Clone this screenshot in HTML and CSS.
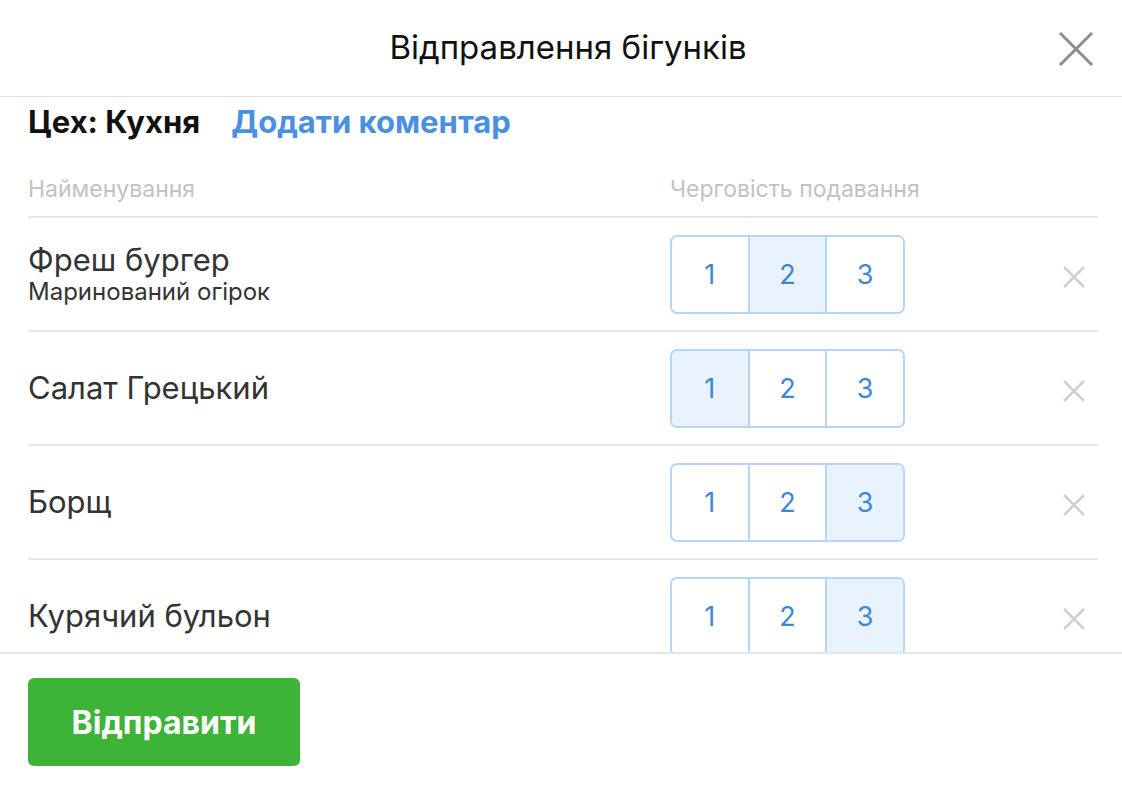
FILE: index.html
```html
<!DOCTYPE html>
<html lang="uk">
<head>
<meta charset="utf-8">
<title>Відправлення бігунків</title>
<link rel="stylesheet" href="styles.css">
</head>
<body>
<div class="modal">
  <header class="modal-header">
    <h1 class="modal-title">Відправлення бігунків</h1>
    <button class="close-btn" aria-label="Закрити">
      <svg width="36" height="36" viewBox="0 0 36 36"><path d="M2 2 L34 34 M34 2 L2 34" stroke="#8c8c8c" stroke-width="3" fill="none"/></svg>
    </button>
  </header>
  <main class="modal-body">
    <div class="shop-line">
      <span class="shop">Цех: Кухня</span>
      <a class="add-comment" href="#">Додати коментар</a>
    </div>
    <div class="table-head">
      <span>Найменування</span>
      <span>Черговість подавання</span>
      <span></span>
    </div>
    <div class="row">
      <div class="name"><div class="title">Фреш бургер</div><div class="sub">Маринований огірок</div></div>
      <div class="seg"><span>1</span><span class="on">2</span><span>3</span></div>
      <button class="remove" aria-label="Видалити"><svg width="24" height="24" viewBox="0 0 24 24"><path d="M2 2 L22 22 M22 2 L2 22" stroke="#cfcfcf" stroke-width="2.5" fill="none"/></svg></button>
    </div>
    <div class="row">
      <div class="name"><div class="title">Салат Грецький</div></div>
      <div class="seg"><span class="on">1</span><span>2</span><span>3</span></div>
      <button class="remove" aria-label="Видалити"><svg width="24" height="24" viewBox="0 0 24 24"><path d="M2 2 L22 22 M22 2 L2 22" stroke="#cfcfcf" stroke-width="2.5" fill="none"/></svg></button>
    </div>
    <div class="row">
      <div class="name"><div class="title">Борщ</div></div>
      <div class="seg"><span>1</span><span>2</span><span class="on">3</span></div>
      <button class="remove" aria-label="Видалити"><svg width="24" height="24" viewBox="0 0 24 24"><path d="M2 2 L22 22 M22 2 L2 22" stroke="#cfcfcf" stroke-width="2.5" fill="none"/></svg></button>
    </div>
    <div class="row">
      <div class="name"><div class="title">Курячий бульон</div></div>
      <div class="seg"><span>1</span><span>2</span><span class="on">3</span></div>
      <button class="remove" aria-label="Видалити"><svg width="24" height="24" viewBox="0 0 24 24"><path d="M2 2 L22 22 M22 2 L2 22" stroke="#cfcfcf" stroke-width="2.5" fill="none"/></svg></button>
    </div>
  </main>
  <footer class="modal-footer">
    <button class="send">Відправити</button>
  </footer>
</div>
</body>
</html>
```
FILE: styles.css
```css
* { box-sizing: border-box; }
html, body { margin: 0; padding: 0; background: #fff; }
body {
  font-family: Inter, Roboto, "Liberation Sans", sans-serif;
  color: #333;
}
.modal {
  width: 1122px;
  height: 792px;
  display: flex;
  flex-direction: column;
}
.modal-header {
  height: 97px;
  border-bottom: 1px solid #e2e2e2;
  display: flex;
  align-items: center;
  justify-content: center;
  position: relative;
  flex: none;
}
.modal-title {
  margin: 0;
  font-size: 33px;
  font-weight: 400;
  color: #111;
  padding-bottom: 2px;
  padding-left: 14px;
}
.close-btn {
  position: absolute;
  right: 28px;
  top: 31px;
  border: 0;
  background: none;
  padding: 0;
  width: 36px;
  height: 36px;
  cursor: pointer;
}
.close-btn svg { display: block; }
.modal-body {
  flex: 1;
  overflow: hidden;
  padding: 0 24px 0 28px;
}
.shop-line {
  display: flex;
  gap: 31px;
  align-items: center;
  height: 48px;
}
.shop {
  font-size: 31px;
  font-weight: 700;
  color: #111;
}
.add-comment {
  font-size: 31px;
  font-weight: 700;
  color: #4a90e2;
  text-decoration: none;
}
.table-head {
  display: grid;
  grid-template-columns: 642px 235px 1fr;
  font-size: 23px;
  color: #c2c2c2;
  line-height: 26px;
  white-space: nowrap;
  padding-top: 31px;
  padding-bottom: 14px;
  border-bottom: 2px solid #e6e6e6;
}
.row {
  display: grid;
  grid-template-columns: 642px 235px 1fr;
  align-items: center;
  height: 114px;
  border-bottom: 2px solid #e6e6e6;
}
.name .title {
  font-size: 31px;
  color: #333;
  line-height: 36px;
}
.name .sub {
  font-size: 24px;
  color: #333;
  line-height: 28px;
}
.seg {
  display: flex;
  height: 79px;
  border: 2px solid #b5d6f8;
  border-radius: 7px;
  overflow: hidden;
}
.seg span {
  flex: 1;
  display: flex;
  align-items: center;
  justify-content: center;
  font-size: 27px;
  color: #3c87da;
}
.seg span + span { border-left: 2px solid #b5d6f8; }
.seg span.on { background: #e8f3fd; }
.remove {
  justify-self: end;
  margin-right: 12px;
  margin-top: 6px;
  border: 0;
  background: none;
  padding: 0;
  width: 24px;
  height: 24px;
}
.remove svg { display: block; }
.modal-footer {
  flex: none;
  height: 140px;
  border-top: 2px solid #e6e6e6;
  padding: 24px 28px 0;
}
.send {
  width: 272px;
  height: 88px;
  border: 0;
  border-radius: 6px;
  background: #3db337;
  color: #fff;
  font-family: inherit;
  font-size: 32px;
  font-weight: 700;
  cursor: pointer;
}
```
